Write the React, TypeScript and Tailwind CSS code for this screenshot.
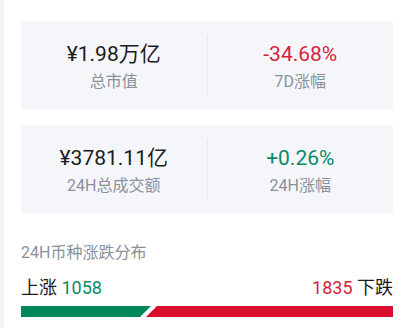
import React from "react";

const font = { fontFamily: 'Roboto, "Noto Sans CJK SC", sans-serif' };

function Stat({ value, label, color }: { value: string; label: string; color: string }) {
  return (
    <div className="flex-1 flex flex-col items-center pt-[19px]">
      <div className={`text-[21px] leading-[28px] ${color}`}>{value}</div>
      <div className="mt-[2px] text-[16px] leading-[24px] text-[#8b909a]">{label}</div>
    </div>
  );
}

function Card({ children }: { children: React.ReactNode }) {
  return <div className="h-[88px] bg-[#f5f6fa] flex">{children}</div>;
}

export default function App() {
  const up = 1058;
  const down = 1835;
  return (
    <div className="flex w-[406px] h-[328px] bg-white overflow-hidden" style={font}>
      <div className="w-[4px] bg-[#f3f4f8] shrink-0" />
      <div className="flex-1 pl-[17px] pr-[13px] pt-[21px] flex flex-col">
        <Card>
          <Stat value="¥1.98万亿" label="总市值" color="text-[#1b1c20]" />
          <div className="w-px bg-[#e9ebf2] mt-[14px] mb-[13px]" />
          <Stat value="-34.68%" label="7D涨幅" color="text-[#d81e3c]" />
        </Card>
        <div className="mt-[16px]">
          <Card>
            <Stat value="¥3781.11亿" label="24H总成交额" color="text-[#1b1c20]" />
            <div className="w-px bg-[#e9ebf2] mt-[14px] mb-[13px]" />
            <Stat value="+0.26%" label="24H涨幅" color="text-[#0a8a6a]" />
          </Card>
        </div>
        <div className="mt-[28px] text-[16px] leading-[24px] text-[#8b909a]">24H币种涨跌分布</div>
        <div className="mt-[10px] flex justify-between text-[18px] leading-[26px]">
          <div className="text-[#1b1c20]">
            上涨 <span className="text-[#0a8a6a]">{up}</span>
          </div>
          <div className="text-[#1b1c20]">
            <span className="text-[#d81e3c]">{down}</span> 下跌
          </div>
        </div>
        <div className="mt-[5px] flex h-[11px]">
          <div
            className="w-[130px] h-full bg-[#00875a] shrink-0"
            style={{ clipPath: "polygon(0 0, 100% 0, calc(100% - 11px) 100%, 0 100%)" }}
          />
          <div
            className="flex-1 h-full bg-[#d80f2c] ml-[-5px]"
            style={{ clipPath: "polygon(11px 0, 100% 0, 100% 100%, 0 100%)" }}
          />
        </div>
      </div>
    </div>
  );
}
